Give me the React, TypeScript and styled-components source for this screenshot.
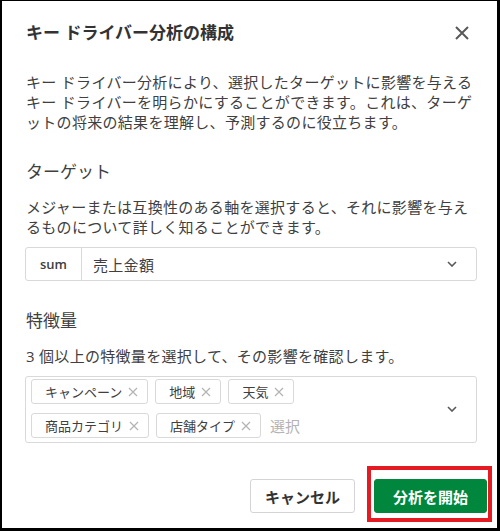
import React from 'react'
import styled, { createGlobalStyle } from 'styled-components'

const Global = createGlobalStyle`
  html, body {
    margin: 0;
    padding: 0;
    background: #000;
  }
  body {
    font-family: "Open Sans", "Noto Sans CJK JP", sans-serif;
    color: #404040;
  }
`

const chipRows = [
  ['キャンペーン', '地域', '天気'],
  ['商品カテゴリ', '店舗タイプ'],
]

const Chevron = () => (
  <svg width="10" height="6" viewBox="0 0 10 6">
    <path d="M1 1 L5 5 L9 1" fill="none" stroke="#595959" strokeWidth="1.6" />
  </svg>
)

const SmallX = () => (
  <svg width="10" height="10" viewBox="0 0 10 10">
    <path d="M1 1 L9 9 M9 1 L1 9" fill="none" stroke="#b3b3b3" strokeWidth="1.2" />
  </svg>
)

const App = () => {
  return (
    <Frame>
      <Global />
      <Dialog>
        <Header>
          <Title>キー ドライバー分析の構成</Title>
          <Close aria-label="close">
            <svg width="14" height="14" viewBox="0 0 14 14">
              <path d="M1 1 L13 13 M13 1 L1 13" fill="none" stroke="#595959" strokeWidth="2" />
            </svg>
          </Close>
        </Header>
        <Body>
          <Para>
            キー ドライバー分析により、選択したターゲットに影響を与えるキー ドライバーを明らかにすることができます。これは、ターゲットの将来の結果を理解し、予測するのに役立ちます。
          </Para>
          <Section>
            <Heading>ターゲット</Heading>
            <Para>メジャーまたは互換性のある軸を選択すると、それに影響を与えるものについて詳しく知ることができます。</Para>
            <SelectBox>
              <Agg>sum</Agg>
              <Value>売上金額</Value>
              <ChevronHold>
                <Chevron />
              </ChevronHold>
            </SelectBox>
          </Section>
          <Section>
            <Heading>特徴量</Heading>
            <Para>3 個以上の特徴量を選択して、その影響を確認します。</Para>
            <MultiBox>
              <ChipRows>
                {chipRows.map((row, i) => (
                  <ChipRow key={i}>
                    {row.map((c) => (
                      <Chip key={c}>
                        {c}
                        <SmallX />
                      </Chip>
                    ))}
                    {i === chipRows.length - 1 && <Placeholder>選択</Placeholder>}
                  </ChipRow>
                ))}
              </ChipRows>
              <ChevronHold>
                <Chevron />
              </ChevronHold>
            </MultiBox>
          </Section>
        </Body>
        <Footer>
          <Button>キャンセル</Button>
          <Highlight>
            <Button primary>分析を開始</Button>
          </Highlight>
        </Footer>
      </Dialog>
    </Frame>
  )
}

export default App

const Frame = styled.div`
  width: 500px;
  height: 531px;
  padding: 1px 3px 3px 2px;
  box-sizing: border-box;
  background: #000;
`
const Dialog = styled.div`
  height: 100%;
  background: #fff;
  display: flex;
  flex-direction: column;
`
const Header = styled.div`
  display: flex;
  align-items: center;
  justify-content: space-between;
  padding: 20px 23px 0 24px;
  height: 24px;
`
const Title = styled.div`
  font-size: 17px;
  font-weight: 700;
  color: #333;
  line-height: 24px;
`
const Close = styled.div`
  width: 24px;
  height: 24px;
  display: flex;
  align-items: center;
  justify-content: center;
`
const Body = styled.div`
  padding: 27px 20px 0 23px;
  display: flex;
  flex-direction: column;
  gap: 28px;
`
const Para = styled.div`
  font-size: 15px;
  letter-spacing: 0.3px;
  line-height: 20px;
  padding-left: 1px;
`
const Section = styled.div`
  display: flex;
  flex-direction: column;
  gap: 13px;
`
const Heading = styled.div`
  font-size: 17px;
  line-height: 24px;
  padding-left: 1px;
`
const SelectBox = styled.div`
  display: flex;
  align-items: center;
  height: 34px;
  box-sizing: border-box;
  border: 1px solid #d9d9d9;
  border-radius: 3px;
  margin-top: -3px;
`
const Agg = styled.div`
  width: 55px;
  height: 100%;
  display: flex;
  align-items: center;
  justify-content: center;
  border-right: 1px solid #d9d9d9;
  font-size: 13px;
  font-weight: 600;
  color: #404040;
`
const Value = styled.div`
  flex: 1;
  padding-left: 11px;
  font-size: 15px;
  letter-spacing: 0.3px;
`
const ChevronHold = styled.div`
  width: 10px;
  display: flex;
  align-items: center;
  margin-right: 19px;
`
const MultiBox = styled.div`
  display: flex;
  align-items: center;
  box-sizing: border-box;
  border: 1px solid #d9d9d9;
  border-radius: 3px;
  padding: 2px 0 4px 5px;
  margin-top: -3px;
`
const ChipRows = styled.div`
  flex: 1;
  display: flex;
  flex-direction: column;
  gap: 9px;
`
const ChipRow = styled.div`
  display: flex;
  align-items: center;
  gap: 7px;
`
const Chip = styled.div`
  display: flex;
  align-items: center;
  gap: 6px;
  height: 25px;
  box-sizing: border-box;
  padding: 0 9px 0 13px;
  border: 1px solid #d9d9d9;
  border-radius: 3px;
  font-size: 13px;
  color: #404040;
`
const Placeholder = styled.div`
  font-size: 15px;
  color: #b3b3b3;
  margin-left: 2px;
`
const Footer = styled.div`
  margin-top: auto;
  display: flex;
  justify-content: flex-end;
  align-items: center;
  gap: 19px;
  padding: 0 10px 15px 0;
`
const Highlight = styled.div`
  position: relative;
  &::after {
    content: '';
    position: absolute;
    top: -13px;
    left: -7px;
    right: -5px;
    bottom: -9px;
    border: 4px solid #e51b24;
    box-sizing: border-box;
    pointer-events: none;
  }
`
const Button = styled.button<{ primary?: boolean }>`
  height: 34px;
  box-sizing: border-box;
  padding: 0 ${(p) => (p.primary ? '18px' : '14px')};
  border-radius: 3px;
  border: 1px solid ${(p) => (p.primary ? '#00873d' : '#d4d4d4')};
  background: ${(p) => (p.primary ? '#00873d' : '#fff')};
  color: ${(p) => (p.primary ? '#fff' : '#333')};
  font-family: "Open Sans", "Noto Sans CJK JP", sans-serif;
  font-size: 15px;
  font-weight: 700;
  display: flex;
  align-items: center;
  cursor: pointer;
`
